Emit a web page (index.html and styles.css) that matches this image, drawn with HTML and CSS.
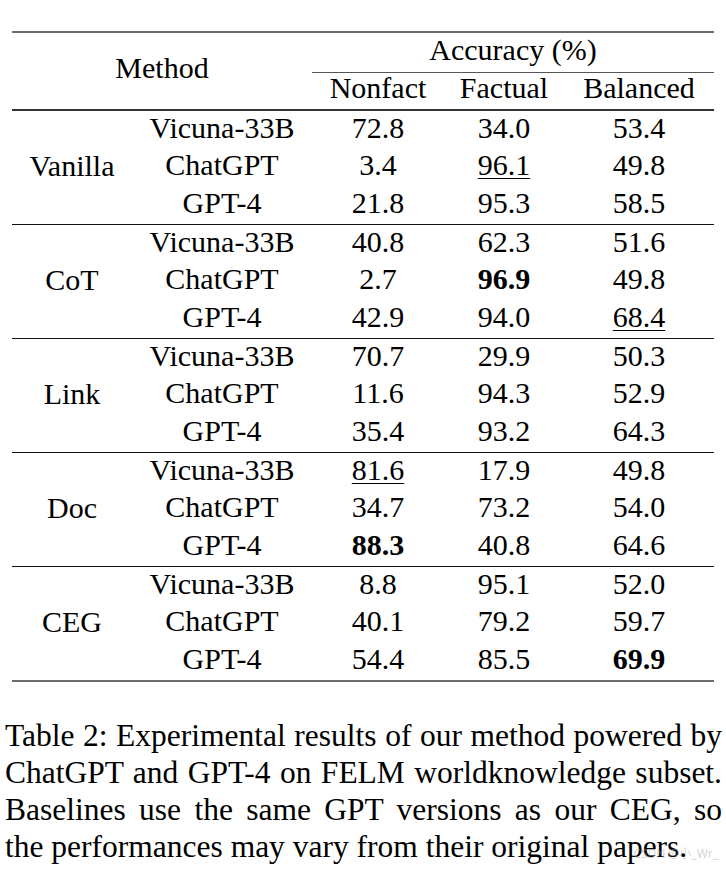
FILE: index.html
```html
<!DOCTYPE html>
<html>
<head>
<meta charset="utf-8">
<link rel="stylesheet" href="styles.css">
</head>
<body>
<div class="page">
  <table class="results">
    <colgroup>
      <col class="c-group"><col class="c-model"><col class="c-nf"><col class="c-fa"><col class="c-ba">
    </colgroup>
    <thead>
      <tr class="h1">
        <td colspan="2" rowspan="2" class="method">Method</td>
        <td colspan="3" class="acc">Accuracy (%)</td>
      </tr>
      <tr class="h2">
        <td class="cm">Nonfact</td><td class="cm">Factual</td><td class="cm">Balanced</td>
      </tr>
    </thead>
    <tbody class="grp first">
      <tr class="top"><td rowspan="3" class="gname">Vanilla</td><td>Vicuna-33B</td><td>72.8</td><td>34.0</td><td>53.4</td></tr>
      <tr><td>ChatGPT</td><td>3.4</td><td><span class="ul">96.1</span></td><td>49.8</td></tr>
      <tr><td>GPT-4</td><td>21.8</td><td>95.3</td><td>58.5</td></tr>
    </tbody>
    <tbody class="grp">
      <tr class="top"><td rowspan="3" class="gname">CoT</td><td>Vicuna-33B</td><td>40.8</td><td>62.3</td><td>51.6</td></tr>
      <tr><td>ChatGPT</td><td>2.7</td><td><b>96.9</b></td><td>49.8</td></tr>
      <tr><td>GPT-4</td><td>42.9</td><td>94.0</td><td><span class="ul">68.4</span></td></tr>
    </tbody>
    <tbody class="grp">
      <tr class="top"><td rowspan="3" class="gname">Link</td><td>Vicuna-33B</td><td>70.7</td><td>29.9</td><td>50.3</td></tr>
      <tr><td>ChatGPT</td><td>11.6</td><td>94.3</td><td>52.9</td></tr>
      <tr><td>GPT-4</td><td>35.4</td><td>93.2</td><td>64.3</td></tr>
    </tbody>
    <tbody class="grp">
      <tr class="top"><td rowspan="3" class="gname">Doc</td><td>Vicuna-33B</td><td><span class="ul">81.6</span></td><td>17.9</td><td>49.8</td></tr>
      <tr><td>ChatGPT</td><td>34.7</td><td>73.2</td><td>54.0</td></tr>
      <tr><td>GPT-4</td><td><b>88.3</b></td><td>40.8</td><td>64.6</td></tr>
    </tbody>
    <tbody class="grp last">
      <tr class="top"><td rowspan="3" class="gname">CEG</td><td>Vicuna-33B</td><td>8.8</td><td>95.1</td><td>52.0</td></tr>
      <tr><td>ChatGPT</td><td>40.1</td><td>79.2</td><td>59.7</td></tr>
      <tr class="bottom"><td>GPT-4</td><td>54.4</td><td>85.5</td><td><b>69.9</b></td></tr>
    </tbody>
  </table>
  <p class="caption">
    <span class="cline">Table 2: Experimental results of our method powered by</span>
    <span class="cline">ChatGPT and GPT-4 on FELM worldknowledge subset.</span>
    <span class="cline">Baselines use the same GPT versions as our CEG, so</span>
    <span class="cline last">the performances may vary from their original papers.</span>
  </p>
  <span class="watermark">CSDN @小_Wr_</span>
</div>
</body>
</html>
```

FILE: styles.css
```css
html, body {
  margin: 0;
  padding: 0;
  background: #ffffff;
}

.page {
  position: relative;
  width: 726px;
  height: 870px;
  overflow: hidden;
  font-family: "Liberation Serif", "Times New Roman", Tinos, serif;
  color: #000;
}

.results {
  margin: 31px 0 0 12px;
  width: 702px;
  border-collapse: separate;
  border-spacing: 0;
  table-layout: fixed;
  font-family: "Liberation Serif", "Times New Roman", Tinos, serif;
  font-size: 30px;
}

.c-group { width: 120px; }
.c-model { width: 180px; }
.c-nf { width: 132px; }
.c-fa { width: 120px; }
.c-ba { width: 150px; }

.results td {
  padding: 0 0 4px 0;
  text-align: center;
  vertical-align: middle;
  line-height: 30px;
  height: 38px;
  box-sizing: border-box;
  white-space: nowrap;
}

.results .h1 td {
  border-top: 2px solid #6b6b6b;
  height: 41px;
  padding-bottom: 6px;
}

.results .h2 td {
  height: 37px;
  padding-bottom: 6px;
}

.results .h2 td.cm {
  border-top: 1px solid #555;
}

.results .grp .top td {
  border-top: 1px solid #111;
}

.results .grp.first .top td {
  border-top: 2px solid #333;
  height: 39px;
}

.results .grp .top td.gname {
  height: auto;
}

.results .grp.last .bottom td,
.results .grp.last td.gname {
  border-bottom: 2px solid #6b6b6b;
}

.results .grp.last .bottom td {
  height: 40px;
}

.results b {
  font-weight: bold;
}

.ul {
  text-decoration: underline;
  text-decoration-thickness: 1px;
  text-underline-offset: 3px;
}

.caption {
  margin: 35px 0 0 5px;
  width: 717px;
  font-family: "Liberation Serif", "Times New Roman", Tinos, serif;
  font-size: 31.5px;
  line-height: 37px;
}

.cline {
  display: block;
  white-space: nowrap;
  text-align: justify;
  text-align-last: justify;
}

.cline.last {
  text-align-last: left;
}

.watermark {
  position: absolute;
  right: 8px;
  bottom: 8px;
  font-family: "Noto Sans", "Noto Sans CJK SC", sans-serif;
  font-size: 12px;
  color: rgba(170, 170, 170, 0.5);
}
```
